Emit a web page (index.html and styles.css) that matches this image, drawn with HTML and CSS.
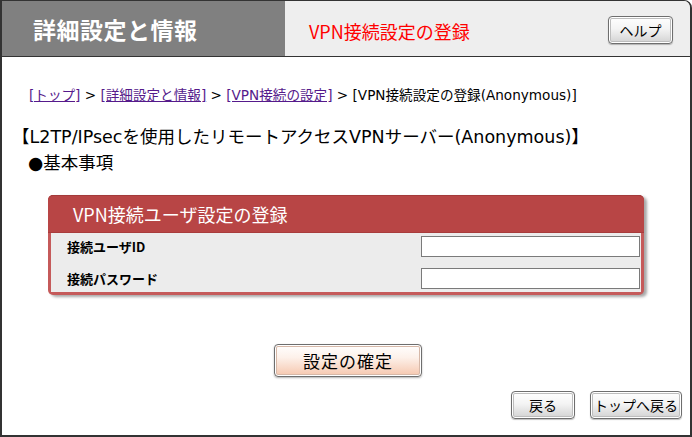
FILE: index.html
```html
<!DOCTYPE html>
<html lang="ja">
<head>
<meta charset="utf-8">
<title>VPN接続設定の登録</title>
<link rel="stylesheet" href="styles.css">
</head>
<body>
<div class="frame">
  <div class="header">
    <div class="title">詳細設定と情報</div>
    <div class="subtitle">
      <span class="subtitle-text">VPN接続設定の登録</span>
      <button class="btn btn-help">ヘルプ</button>
    </div>
  </div>
  <div class="content">
    <div class="breadcrumb">
      <a href="#">[トップ]</a> &gt; <a href="#">[詳細設定と情報]</a> &gt; <a href="#">[VPN接続の設定]</a> &gt; [VPN接続設定の登録(Anonymous)]
    </div>
    <div class="heading">【L2TP/IPsecを使用したリモートアクセスVPNサーバー(Anonymous)】</div>
    <div class="section">●基本事項</div>
    <div class="panel">
      <div class="panel-head">VPN接続ユーザ設定の登録</div>
      <div class="panel-body">
        <div class="row">
          <span class="label">接続ユーザID</span>
          <input class="field" type="text">
        </div>
        <div class="row">
          <span class="label">接続パスワード</span>
          <input class="field" type="password">
        </div>
      </div>
    </div>
    <div class="confirm-wrap">
      <button class="btn btn-confirm">設定の確定</button>
    </div>
    <div class="nav-buttons">
      <button class="btn btn-back">戻る</button>
      <button class="btn btn-top">トップへ戻る</button>
    </div>
  </div>
</div>
</body>
</html>
```
FILE: styles.css
```css
* { box-sizing: border-box; }
html, body {
  margin: 0;
  padding: 0;
  background: #ffffff;
}
body {
  font-family: "Noto Sans CJK JP", "Noto Sans", sans-serif;
  color: #000;
}
.frame {
  width: 692px;
  height: 437px;
  border: 2px solid #333;
  border-top-width: 1px;
  border-top-right-radius: 8px;
  overflow: hidden;
  display: flex;
  flex-direction: column;
}
.header {
  height: 56px;
  display: flex;
  border-bottom: 1px solid #333;
  flex-shrink: 0;
}
.title {
  width: 283px;
  background: #808080;
  color: #fff;
  font-weight: bold;
  font-size: 23px;
  padding-left: 31px;
  display: flex;
  align-items: center;
  letter-spacing: 0.5px;
}
.subtitle {
  flex: 1;
  background: #eeeeee;
  display: flex;
  align-items: center;
  padding-left: 24px;
  padding-right: 17px;
}
.subtitle-text {
  color: #ff0000;
  font-size: 18px;
  padding-top: 4px;
}
.btn {
  font-family: "Noto Sans CJK JP", "Noto Sans", sans-serif;
  color: #000;
  border: 1px solid #6e6e6e;
  border-radius: 4px;
  background: linear-gradient(#ffffff 0%, #f4f4f4 45%, #d2d2d2 100%);
  box-shadow: inset 0 0 0 1px #ffffff, inset 0 0 0 2px #bdbdbd, 0 1px 1px rgba(0,0,0,0.25);
  padding: 0;
  cursor: pointer;
}
.btn-help {
  margin-left: auto;
  width: 65px;
  height: 28px;
  font-size: 14px;
  margin-top: 3px;
}
.content {
  flex: 1;
  display: flex;
  flex-direction: column;
  font-family: "DejaVu Sans", "Noto Sans CJK JP", sans-serif;
}
.breadcrumb {
  font-size: 13.6px;
  line-height: 20px;
  padding-top: 28px;
  padding-left: 27px;
}
.breadcrumb a {
  color: #551a8b;
  text-decoration: underline;
}
.heading {
  margin-top: 19px;
  font-size: 17.5px;
  line-height: 26px;
  padding-left: 10px;
}
.section {
  font-size: 17.5px;
  line-height: 26px;
  padding-left: 26px;
}
.panel {
  margin-top: 19px;
  margin-left: 46px;
  width: 596px;
  border-radius: 5px;
  box-shadow: 3px 2px 3px rgba(0,0,0,0.35);
  background: #c55a5a;
  padding: 0 3px 3px 3px;
}
.panel-head {
  height: 38px;
  margin: 0 -3px;
  background: #b84545;
  border-radius: 5px 5px 0 0;
  border-top: 1px solid #a33a3a;
  border-bottom: 1px solid #a83c3c;
  color: #fff;
  font-size: 18px;
  padding-left: 25px;
  display: flex;
  align-items: center;
  font-family: "Noto Sans CJK JP", sans-serif;
}
.panel-body {
  background: #ececec;
  padding: 3px 0 3px 0;
  display: flex;
  flex-direction: column;
  gap: 11px;
}
.row {
  height: 21px;
  display: flex;
  align-items: center;
  justify-content: space-between;
}
.label {
  font-size: 13px;
  font-weight: bold;
  padding-left: 16px;
  font-family: "Noto Sans CJK JP", sans-serif;
}
.field {
  width: 219px;
  height: 21px;
  border: 1px solid #7a7a7a;
  background: #fff;
  margin: 0 1px 0 0;
  padding: 0;
}
.confirm-wrap {
  display: flex;
  justify-content: center;
  margin-top: 49px;
  padding-left: 4px;
}
.btn-confirm {
  width: 148px;
  height: 33px;
  font-size: 17px;
  letter-spacing: 1px;
  background: linear-gradient(#ffffff 0%, #fdf1ea 40%, #f5c6ad 100%);
  box-shadow: inset 0 0 0 1px #ffffff, inset 0 0 0 2px #d6b8a8, 0 1px 2px rgba(0,0,0,0.3);
}
.nav-buttons {
  display: flex;
  justify-content: flex-end;
  gap: 15px;
  margin-top: 14px;
  padding-right: 8px;
}
.btn-back {
  width: 64px;
  height: 28px;
  font-size: 14px;
}
.btn-top {
  width: 92px;
  height: 28px;
  font-size: 14px;
}
```
